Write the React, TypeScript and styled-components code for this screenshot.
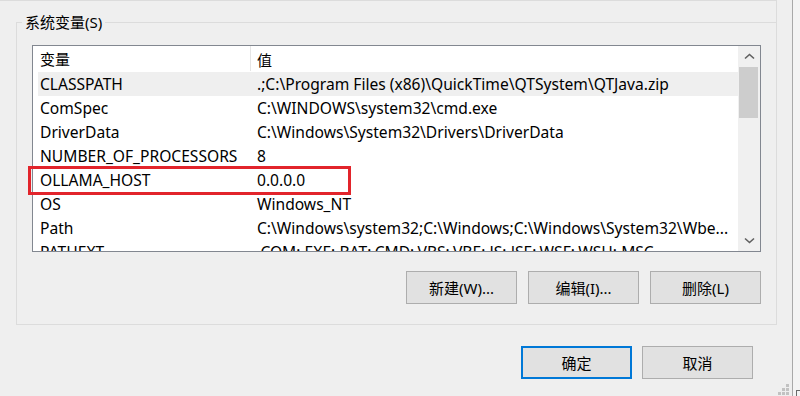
import React from 'react';
import styled, { createGlobalStyle } from 'styled-components';

const GlobalStyle = createGlobalStyle`
  html, body {
    margin: 0;
    padding: 0;
    background: #efefef;
  }
  body {
    font-family: "Noto Sans", "Noto Sans CJK SC", sans-serif;
    font-size: 15px;
    color: #000;
  }
`;

const Screen = styled.div`
  width: 800px;
  height: 396px;
  display: flex;
  overflow: hidden;
  background: #efefef;
`;

const Dialog = styled.div`
  position: relative;
  width: 793px;
  flex-shrink: 0;
  box-sizing: border-box;
  border-right: 1px solid #a9a9a9;
  display: flex;
  flex-direction: column;
`;

const Strip = styled.div`
  flex: 1;
  background: #f4f4f4;
  display: flex;
  flex-direction: column;
  justify-content: flex-end;
`;

const StripCorner = styled.div`
  margin-left: 3px;
  height: 5px;
  border-top: 1px solid #6a6a6a;
  border-left: 1px solid #6a6a6a;
`;

// bottom edge of the user-variables group above
const UpperEdge = styled.div`
  width: 777px;
  height: 22px;
  flex-shrink: 0;
  box-sizing: border-box;
  border-top: 1px solid #dcdcdc;
  border-right: 1px solid #dcdcdc;
`;

const Group = styled.fieldset`
  margin: -10px 15px 0 16px;
  width: 761px;
  box-sizing: border-box;
  min-width: 0;
  padding: 0;
  border: 1px solid #dcdcdc;
`;

const Legend = styled.legend`
  margin-left: 5px;
  padding: 0 3px;
  font-family: "Noto Sans", "Noto Sans CJK SC", sans-serif;
  font-size: 15px;
  line-height: 20px;
`;

const GroupBody = styled.div`
  padding: 13px 15px 20px 15px;
`;

const ListWrap = styled.div`
  position: relative;
`;

const List = styled.div`
  width: 729px;
  height: 207px;
  box-sizing: border-box;
  border: 1px solid #828790;
  display: flex;
  overflow: hidden;
  background: #fff;
`;

const Table = styled.div`
  flex: 1;
  min-width: 0;
  padding-left: 5px;
  display: flex;
  flex-direction: column;
  font-size: 15.6px;
`;

const HeaderRow = styled.div`
  height: 26px;
  flex-shrink: 0;
  display: grid;
  grid-template-columns: 213px 1fr;
  font-size: 15px;
`;

const HeaderCell = styled.div<{ $first?: boolean }>`
  display: flex;
  align-items: center;
  padding-left: ${({ $first }) => ($first ? '2px' : '6px')};
  border-right: ${({ $first }) => ($first ? '1px solid #e5e5e5' : 'none')};
  margin-bottom: ${({ $first }) => ($first ? '1px' : '0')};
`;

const Row = styled.div<{ $selected?: boolean }>`
  height: 24px;
  flex-shrink: 0;
  display: grid;
  grid-template-columns: 213px 1fr;
  align-items: center;
  background: ${({ $selected }) => ($selected ? '#efefef' : 'transparent')};
`;

const Cell = styled.div<{ $value?: boolean }>`
  padding-left: ${({ $value }) => ($value ? '6px' : '2px')};
  white-space: nowrap;
  overflow: hidden;
  line-height: 24px;
`;

const Scrollbar = styled.div`
  width: 22px;
  flex-shrink: 0;
  background: #f0f0f0;
  display: flex;
  flex-direction: column;
`;

const ScrollButton = styled.div`
  height: 21px;
  display: flex;
  align-items: center;
  justify-content: center;
`;

const Thumb = styled.div`
  height: 51px;
  margin: 0 2px 0 1px;
  background: #cdcdcd;
`;

const ScrollSpace = styled.div`
  flex: 1;
`;

const Highlight = styled.div`
  position: absolute;
  left: -4px;
  top: 121px;
  width: 323px;
  height: 29px;
  box-sizing: border-box;
  border: 3px solid #e2242b;
  pointer-events: none;
`;

const ButtonRow = styled.div`
  margin-top: 19px;
  display: flex;
  justify-content: flex-end;
  gap: 11px;
`;

const Button = styled.button<{ $primary?: boolean }>`
  width: 111px;
  height: 33px;
  box-sizing: border-box;
  margin: 0;
  padding: 0;
  background: #e1e1e1;
  border: ${({ $primary }) => ($primary ? '2px solid #0078d7' : '1px solid #adadad')};
  font-family: "Noto Sans", "Noto Sans CJK SC", sans-serif;
  font-size: 15px;
  color: #000;
`;

const Footer = styled.div`
  margin-top: 21px;
  padding-right: 39px;
  display: flex;
  justify-content: flex-end;
  gap: 10px;
`;

const Grip = styled.svg`
  position: absolute;
  right: 3px;
  bottom: 1px;
`;

const Chevron = ({ down }: { down?: boolean }) => (
  <svg width="11" height="7" viewBox="0 0 11 7">
    <polyline
      points={down ? '1,1.5 5.5,5.5 10,1.5' : '1,5.5 5.5,1.5 10,5.5'}
      fill="none"
      stroke="#606060"
      strokeWidth="1.6"
    />
  </svg>
);

const rows = [
  ['CLASSPATH', '.;C:\\Program Files (x86)\\QuickTime\\QTSystem\\QTJava.zip'],
  ['ComSpec', 'C:\\WINDOWS\\system32\\cmd.exe'],
  ['DriverData', 'C:\\Windows\\System32\\Drivers\\DriverData'],
  ['NUMBER_OF_PROCESSORS', '8'],
  ['OLLAMA_HOST', '0.0.0.0'],
  ['OS', 'Windows_NT'],
  ['Path', 'C:\\Windows\\system32;C:\\Windows;C:\\Windows\\System32\\Wbe...'],
  ['PATHEXT', '.COM;.EXE;.BAT;.CMD;.VBS;.VBE;.JS;.JSE;.WSF;.WSH;.MSC'],
];

const App = () => {
  return (
    <>
      <GlobalStyle />
      <Screen>
        <Dialog>
          <UpperEdge />
          <Group>
            <Legend>系统变量(S)</Legend>
            <GroupBody>
              <ListWrap>
                <List>
                  <Table>
                    <HeaderRow>
                      <HeaderCell $first>变量</HeaderCell>
                      <HeaderCell>值</HeaderCell>
                    </HeaderRow>
                    {rows.map(([name, value], i) => (
                      <Row key={name} $selected={i === 0}>
                        <Cell>{name}</Cell>
                        <Cell $value>{value}</Cell>
                      </Row>
                    ))}
                  </Table>
                  <Scrollbar>
                    <ScrollButton>
                      <Chevron />
                    </ScrollButton>
                    <Thumb />
                    <ScrollSpace />
                    <ScrollButton>
                      <Chevron down />
                    </ScrollButton>
                  </Scrollbar>
                </List>
                <Highlight />
              </ListWrap>
              <ButtonRow>
                <Button>新建(W)...</Button>
                <Button>编辑(I)...</Button>
                <Button>删除(L)</Button>
              </ButtonRow>
            </GroupBody>
          </Group>
          <Footer>
            <Button $primary>确定</Button>
            <Button>取消</Button>
          </Footer>
          <Grip width="12" height="11" viewBox="0 0 12 11">
            <rect x="9" y="0" width="3" height="3" fill="#c2c2c2" />
            <rect x="5" y="4" width="3" height="3" fill="#c2c2c2" />
            <rect x="9" y="4" width="3" height="3" fill="#c2c2c2" />
            <rect x="1" y="8" width="3" height="3" fill="#c2c2c2" />
            <rect x="5" y="8" width="3" height="3" fill="#c2c2c2" />
            <rect x="9" y="8" width="3" height="3" fill="#c2c2c2" />
          </Grip>
        </Dialog>
        <Strip>
          <StripCorner />
        </Strip>
      </Screen>
    </>
  );
};

export default App;
